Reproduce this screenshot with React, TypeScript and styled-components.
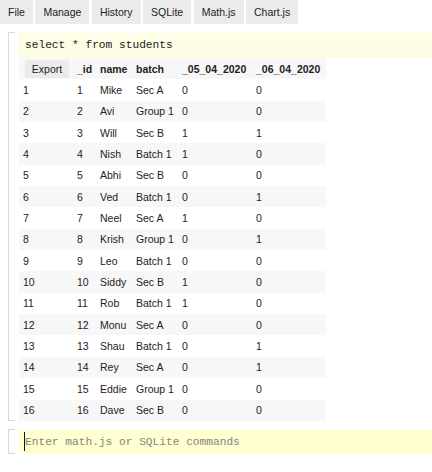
import React from "react";
import styled, { createGlobalStyle } from "styled-components";

const Global = createGlobalStyle`
  html, body { margin: 0; padding: 0; background: #fff; }
  body { font-family: "Liberation Sans", Arial, sans-serif; color: #222; }
`;

const Page = styled.div`
  width: 432px;
  height: 472px;
  overflow: hidden;
`;

const TabBar = styled.nav`
  display: flex;
  gap: 2.5px;
  height: 24px;
`;

const Tab = styled.div`
  padding: 0 8px;
  background: #ebebeb;
  line-height: 24px;
  font-size: 10.5px;
  color: #222;
`;

const Cell = styled.section<{ $top: number }>`
  display: flex;
  margin: ${(p) => p.$top}px 0 0 8px;
`;

const Gutter = styled.div`
  width: 6px;
  flex: none;
  border: 1px solid #d9d9d9;
  border-right: none;
`;

const Body = styled.div`
  flex: 1;
  margin-left: 4px;
  padding-top: 1px;
  min-width: 0;
`;

const Editor = styled.div<{ $bg: string; $h: number }>`
  height: ${(p) => p.$h}px;
  line-height: ${(p) => p.$h}px;
  background: ${(p) => p.$bg};
  padding-left: 6px;
  font-family: "Liberation Mono", "Courier New", monospace;
  font-size: 11.2px;
  color: #222;
  display: flex;
  align-items: center;
  white-space: pre;
`;

const Placeholder = styled.span`
  color: #85857a;
`;

const Caret = styled.span`
  width: 1px;
  height: 19px;
  background: #111;
  margin-left: -1px;
`;

const Table = styled.table`
  border-collapse: collapse;
  table-layout: fixed;
  width: 307px;
  font-size: 10.5px;
`;

const Row = styled.tr<{ $shade: boolean }>`
  height: 21.35px;
  background: ${(p) => (p.$shade ? "#f7f7f7" : "#fff")};
`;

const Th = styled.th`
  text-align: left;
  font-weight: bold;
  padding: 0 0 0 4px;
  white-space: nowrap;
  color: #222;
`;

const Td = styled.td`
  padding: 0 0 0 4px;
  white-space: nowrap;
  color: #222;
`;

const ExportButton = styled.span`
  display: inline-block;
  margin-left: 2px;
  height: 18px;
  line-height: 18px;
  width: 44px;
  text-align: center;
  background: #ebebeb;
  font-weight: normal;
`;

const widths = [54, 23, 36, 46, 74, 74];

const rows: [string, string, string, string][] = [
  ["Mike", "Sec A", "0", "0"],
  ["Avi", "Group 1", "0", "0"],
  ["Will", "Sec B", "1", "1"],
  ["Nish", "Batch 1", "1", "0"],
  ["Abhi", "Sec B", "0", "0"],
  ["Ved", "Batch 1", "0", "1"],
  ["Neel", "Sec A", "1", "0"],
  ["Krish", "Group 1", "0", "1"],
  ["Leo", "Batch 1", "0", "0"],
  ["Siddy", "Sec B", "1", "0"],
  ["Rob", "Batch 1", "1", "0"],
  ["Monu", "Sec A", "0", "0"],
  ["Shau", "Batch 1", "0", "1"],
  ["Rey", "Sec A", "0", "1"],
  ["Eddie", "Group 1", "0", "0"],
  ["Dave", "Sec B", "0", "0"],
];

const tabs = ["File", "Manage", "History", "SQLite", "Math.js", "Chart.js"];

export default function App() {
  return (
    <Page>
      <Global />
      <TabBar>
        {tabs.map((t) => (
          <Tab key={t}>{t}</Tab>
        ))}
      </TabBar>
      <Cell $top={8}>
        <Gutter />
        <Body>
          <Editor $bg="#fdfde6" $h={25}>select * from students</Editor>
          <Table>
            <colgroup>
              {widths.map((w, i) => (
                <col key={i} style={{ width: w }} />
              ))}
            </colgroup>
            <thead>
              <Row $shade>
                <Th>
                  <ExportButton>Export</ExportButton>
                </Th>
                <Th>_id</Th>
                <Th>name</Th>
                <Th>batch</Th>
                <Th>_05_04_2020</Th>
                <Th>_06_04_2020</Th>
              </Row>
            </thead>
            <tbody>
              {rows.map((r, i) => (
                <Row key={i} $shade={i % 2 === 1}>
                  <Td>{i + 1}</Td>
                  <Td>{i + 1}</Td>
                  <Td>{r[0]}</Td>
                  <Td>{r[1]}</Td>
                  <Td>{r[2]}</Td>
                  <Td>{r[3]}</Td>
                </Row>
              ))}
            </tbody>
          </Table>
        </Body>
      </Cell>
      <Cell $top={8}>
        <Gutter />
        <Body>
          <Editor $bg="#ffffd2" $h={24}>
            <Caret />
            <Placeholder>Enter math.js or SQLite commands</Placeholder>
          </Editor>
        </Body>
      </Cell>
    </Page>
  );
}
